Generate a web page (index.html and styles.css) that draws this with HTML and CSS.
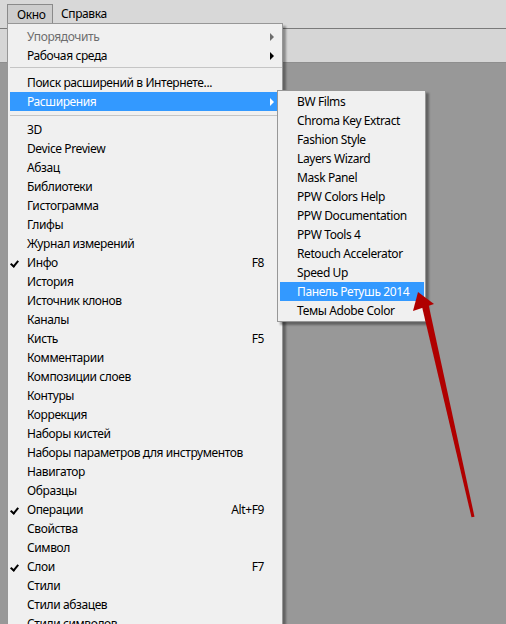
FILE: index.html
```html
<!DOCTYPE html>
<html lang="ru">
<head>
    <meta charset="UTF-8">
    <title>Окно — Расширения</title>
    <link rel="stylesheet" href="styles.css">
</head>
<body>
    <div class="app">
        <div class="menubar">
            <span class="menubar-item active">Окно</span>
            <span class="menubar-item">Справка</span>
        </div>
        <div class="options"></div>
        <div class="workspace"></div>
    </div>

    <div class="menu main-menu">
        <div class="item disabled">Упорядочить<span class="arrow"></span></div>
        <div class="item">Рабочая среда<span class="arrow"></span></div>
        <div class="sep"></div>
        <div class="item">Поиск расширений в Интернете...</div>
        <div class="item selected">Расширения<span class="arrow"></span></div>
        <div class="sep wide"></div>
        <div class="item">3D</div>
        <div class="item">Device Preview</div>
        <div class="item">Абзац</div>
        <div class="item">Библиотеки</div>
        <div class="item">Гистограмма</div>
        <div class="item">Глифы</div>
        <div class="item">Журнал измерений</div>
        <div class="item checked">Инфо<span class="key">F8</span></div>
        <div class="item">История</div>
        <div class="item">Источник клонов</div>
        <div class="item">Каналы</div>
        <div class="item">Кисть<span class="key">F5</span></div>
        <div class="item">Комментарии</div>
        <div class="item">Композиции слоев</div>
        <div class="item">Контуры</div>
        <div class="item">Коррекция</div>
        <div class="item">Наборы кистей</div>
        <div class="item">Наборы параметров для инструментов</div>
        <div class="item">Навигатор</div>
        <div class="item">Образцы</div>
        <div class="item checked">Операции<span class="key">Alt+F9</span></div>
        <div class="item">Свойства</div>
        <div class="item">Символ</div>
        <div class="item checked">Слои<span class="key">F7</span></div>
        <div class="item">Стили</div>
        <div class="item">Стили абзацев</div>
        <div class="item">Стили символов</div>
    </div>

    <div class="menu sub-menu">
        <div class="item">BW Films</div>
        <div class="item">Chroma Key Extract</div>
        <div class="item">Fashion Style</div>
        <div class="item">Layers Wizard</div>
        <div class="item">Mask Panel</div>
        <div class="item">PPW Colors Help</div>
        <div class="item">PPW Documentation</div>
        <div class="item">PPW Tools 4</div>
        <div class="item">Retouch Accelerator</div>
        <div class="item">Speed Up</div>
        <div class="item selected">Панель Ретушь 2014</div>
        <div class="item">Темы Adobe Color</div>
    </div>

    <!-- red pointer drawn over the screenshot -->
    <svg class="pointer" width="506" height="624" viewBox="0 0 506 624">
        <polygon points="420.6,300.8 427.4,299.2 474.5,516.7 471.5,517.3" fill="#b00000"/>
        <polygon points="418,292 434,304 413,311" fill="#b00000"/>
    </svg>
</body>
</html>
```

FILE: styles.css
```css
html, body {
    margin: 0;
    height: 624px;
    overflow: hidden;
}

body {
    font-family: "Noto Sans", "Open Sans", sans-serif;
    font-size: 12px;
    letter-spacing: -0.4px;
    color: #000;
    position: relative;
}

.app {
    display: flex;
    flex-direction: column;
    height: 624px;
}

.menubar {
    height: 24px;
    padding: 4px 0 0 7px;
    background: #d8d8d8;
    border-bottom: 1px solid #7a7a7a;
    display: flex;
    align-items: flex-start;
}

.menubar-item {
    line-height: 19px;
    padding: 0 8px;
}

.menubar-item.active {
    padding: 0 8px 0 9px;
    height: 20px;
    width: 46px;
    background: #cdcdcd;
    border: 1px solid #8a8a8a;
    border-bottom: none;
    box-sizing: border-box;
}

.options {
    height: 33px;
    background: #d6d6d6;
    border-bottom: 1px solid #8e8e8e;
}

.workspace {
    flex: 1;
    background: #989898;
}

.menu {
    position: absolute;
    background: #f0f0f0;
    border: 1px solid #979797;
    box-shadow: 3px 3px 2px rgba(0, 0, 0, 0.35);
}

.main-menu {
    left: 7px;
    top: 23px;
    width: 274px;
    padding: 3px 0 0;
}

.sub-menu {
    left: 277px;
    top: 90px;
    width: 147px;
    padding: 1px 0;
}

.item {
    position: relative;
    height: 18px;
    line-height: 18px;
    padding-top: 1px;
    white-space: nowrap;
}

.main-menu .item {
    margin: 0 4px 0 2px;
    padding-left: 17px;
    padding-right: 14px;
    display: flex;
    justify-content: space-between;
}

.sub-menu .item {
    margin: 0 1px 0 2px;
    padding-left: 17px;
}

.item.selected {
    background: #3399ff;
    color: #fff;
}

.item.disabled {
    color: #6d6d6d;
}

.item.checked::before {
    content: "";
    position: absolute;
    left: 2px;
    top: 6px;
    width: 3px;
    height: 6px;
    border: solid #000;
    border-width: 0 2px 2px 0;
    transform: rotate(40deg);
}

.arrow {
    position: absolute;
    right: 4px;
    top: 6px;
    width: 0;
    height: 0;
    border-style: solid;
    border-width: 4px 0 4px 4px;
    border-color: transparent transparent transparent #000;
}

.disabled .arrow {
    border-left-color: #6d6d6d;
}

.selected .arrow {
    border-left-color: #fff;
}

.sep {
    height: 1px;
    margin: 2px 0 5px 2px;
    background: #c5c5c5;
}

.sep.wide {
    margin: 4px 0 4px 2px;
}

.pointer {
    position: absolute;
    left: 0;
    top: 0;
}
```
